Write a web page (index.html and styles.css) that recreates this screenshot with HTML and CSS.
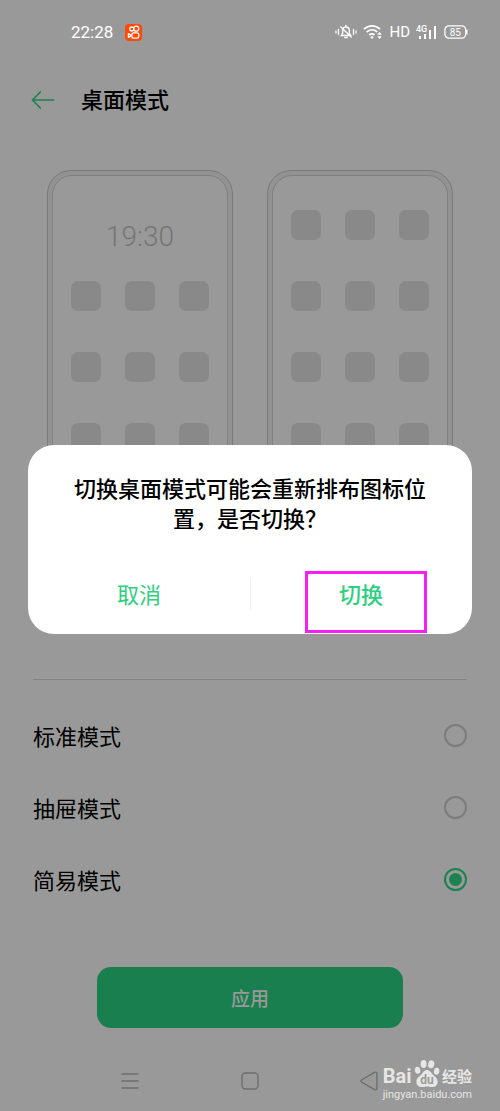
FILE: index.html
```html
<!DOCTYPE html>
<html lang="zh-CN">
<head>
<meta charset="utf-8">
<meta name="viewport" content="width=device-width, initial-scale=1">
<title>桌面模式</title>
<link rel="stylesheet" href="styles.css">
</head>
<body>
<div class="screen">
  <div class="status">
    <span class="status-time">22:28</span>
    <svg class="app-icon" width="17" height="17" viewBox="0 0 17 17" fill="none" stroke="#fff" stroke-width="1.3">
      <rect width="17" height="17" rx="4" fill="#ff4906" stroke="none"/>
      <circle cx="6.8" cy="5" r="2"/><circle cx="11.2" cy="4.7" r="2.5"/>
      <rect x="6.8" y="8.8" width="7" height="5.4" rx="1.8"/>
      <path d="M6.8 11.5 3.4 9.6v3.8z" stroke-linejoin="round"/>
    </svg>
    <div class="status-icons">
      <svg width="22" height="16" viewBox="0 0 22 16" fill="none" stroke="#fff" stroke-width="1.3" stroke-linecap="round">
        <path d="M6.200 11.500h9.600L14.300 9V6.400c0-2-1.300-3.400-3.300-3.400S7.700 4.400 7.700 6.400V9zM11 1.500V3M9.800 13.500h2.400M5.800 3l10.400 10"/>
        <path d="M3.500 5.500v5M1 7v2M18.500 5.500v5M21 7v2"/>
      </svg>
      <svg width="20" height="16" viewBox="0 0 20 16" fill="none" stroke="#fff" stroke-width="1.800">
        <path d="M1 5.200C5.700.7 12.300.7 17 5.200M3.600 8.200c3.300-3.100 7.500-3.100 10.600-.2M6.200 11c1.800-1.500 3.600-1.500 5.300 0"/>
        <path d="M9 15l-1.800-2c1-.9 2.600-.9 3.600 0z" fill="#fff" stroke="none"/>
        <path d="M14.200 10.800 16.500 8l2.300 2.800zM14.200 12.200l2.300 2.800 2.300-2.800z" fill="#fff" stroke="none"/>
      </svg>
      <span class="hd">HD</span>
      <svg width="22" height="16" viewBox="0 0 22 16" fill="#fff">
        <text class="net" x="0" y="8">4G</text>
        <rect x="3" y="12" width="2" height="3"/><rect x="8" y="10" width="2" height="5"/>
        <rect x="13" y="6" width="2" height="9"/><rect x="18" y="2" width="2" height="13"/>
      </svg>
      <svg width="24" height="14" viewBox="0 0 24 14" fill="none" stroke="#fff">
        <rect x=".9" y=".9" width="20.800" height="12.200" rx="4" stroke-width="1.300"/>
        <path d="M22.800 4.800v4.400" stroke-width="1.500"/>
        <text class="charge" x="11.300" y="10.600" text-anchor="middle" fill="#fff" stroke="none">85</text>
      </svg>
    </div>
  </div>

  <header class="header">
    <button class="back" aria-label="返回">
      <svg width="24" height="18" viewBox="0 0 24 18" fill="none" stroke="#1a8350" stroke-width="1.700" stroke-linecap="round" stroke-linejoin="round"><path d="M22.500 9H1.500M9.300 1 1.500 9l7.800 8"/></svg>
    </button>
    <h1 class="title">桌面模式</h1>
  </header>

  <main class="content">
    <div class="previews">
      <div class="phone"><div class="phone-face">
        <div class="clock">19:30</div>
        <div class="apps"><i></i><i></i><i></i><i></i><i></i><i></i><i></i><i></i><i></i></div>
      </div></div>
      <div class="phone"><div class="phone-face">
        <div class="apps"><i></i><i></i><i></i><i></i><i></i><i></i><i></i><i></i><i></i><i></i><i></i><i></i></div>
      </div></div>
    </div>
    <form class="modes">
      <label class="mode">标准模式<input class="radio" type="radio" name="mode"></label>
      <label class="mode">抽屉模式<input class="radio" type="radio" name="mode"></label>
      <label class="mode">简易模式<input class="radio" type="radio" name="mode" checked></label>
    </form>
    <button class="apply">应用</button>
  </main>

  <nav class="nav">
    <button class="nav-button" aria-label="菜单"><svg width="20" height="20" viewBox="0 0 20 20" fill="none" stroke="#6e6e6e" stroke-width="1.300"><path d="M1.500 3h17M1.500 10h17M1.500 17h17"/></svg></button>
    <button class="nav-button" aria-label="主页"><svg width="20" height="20" viewBox="0 0 20 20" fill="none" stroke="#6e6e6e" stroke-width="1.400"><rect x="2" y="2" width="16" height="16" rx="3.500"/></svg></button>
    <button class="nav-button" aria-label="后退"><svg width="20" height="20" viewBox="0 0 20 20" fill="none" stroke="#6e6e6e" stroke-width="1.400" stroke-linejoin="round"><path d="M1.500 9 14.500 1.300q2.400-.8 2.400 1.500v14.400q0 2.300-2.400 1.500L1.500 11q-1-1 0-2z"/></svg></button>
  </nav>

  <div class="dialog" role="dialog" aria-modal="true" aria-labelledby="question">
    <h2 class="question" id="question">切换桌面模式可能会重新排布图标位置，是否切换？</h2>
    <div class="actions">
      <button class="action">取消</button>
      <button class="action action-main">切换<span class="marker"></span></button>
    </div>
  </div>

  <div class="watermark">
    <div class="brand">
      <span class="bai">Bai</span>
      <svg width="26" height="30" viewBox="0 0 26 30" fill="#e6e6e6">
        <ellipse cx="3.600" cy="12.300" rx="2.700" ry="3.500" transform="rotate(-10 3.600 12.300)"/>
        <ellipse cx="9.600" cy="6" rx="3" ry="4"/>
        <ellipse cx="17.200" cy="6.300" rx="3" ry="4" transform="rotate(12 17.200 6.300)"/>
        <ellipse cx="22.600" cy="13.300" rx="2.700" ry="3.500" transform="rotate(10 22.600 13.300)"/>
        <path d="M13 12c2.800 0 4 2.500 6 4.800 2 2.100 4.600 3.700 4.600 6.900 0 3.800-2.500 5.300-5.600 5.300-1.800 0-3.300-.6-5-.6s-3.200.6-5 .6c-3 0-5.600-1.500-5.600-5.300 0-3.200 2.600-4.800 4.600-6.900 2-2.300 3.200-4.800 6-4.800z"/>
        <text class="du" x="13" y="26" text-anchor="middle">du</text>
      </svg>
      <span class="jingyan">经验</span>
    </div>
    <div class="site">jingyan.baidu.com</div>
  </div>
</div>
</body>
</html>
```

FILE: styles.css
```css
* { box-sizing: border-box; }

body {
  margin: 0;
  background: #999;
  color: #000;
  font-family: Roboto, "Noto Sans CJK SC", sans-serif;
}

button {
  margin: 0;
  padding: 0;
  border: 0;
  background: none;
  font: inherit;
}

svg { display: block; }

.screen {
  position: relative;
  display: flex;
  flex-direction: column;
  min-height: 100vh;
}

.status {
  display: flex;
  align-items: center;
  gap: 12px;
  height: 64px;
  padding: 0 32px 0 71px;
  color: #fff;
}
.status-time { font-size: 17px; }
.status-icons {
  display: flex;
  align-items: center;
  gap: 6px;
  margin-left: auto;
}
.hd { font-size: 15px; }
.net { font: 500 9px Roboto, sans-serif; }
.charge { font: 10px Roboto, sans-serif; }

.header {
  display: flex;
  align-items: center;
  gap: 26px;
  height: 72px;
  padding: 0 31px;
}
.title {
  margin: 0;
  padding-bottom: 4px;
  font-size: 22px;
  font-weight: 500;
}

.content {
  display: flex;
  flex-direction: column;
  flex: 1;
  padding: 34px 33px 0;
}

.previews {
  display: flex;
  justify-content: center;
  gap: 34px;
  height: 510px;
  padding-bottom: 110px;
  border-bottom: 1px solid #848484;
}
.phone {
  width: 186px;
  padding: 4px;
  border: 1px solid #7a7a7a;
  border-radius: 24px;
  background: #929292;
}
.phone-face {
  display: flex;
  flex-direction: column;
  height: 100%;
  padding: 34px 18px 0;
  border: 1px solid #808080;
  border-radius: 20px;
  background: #999;
}
.clock {
  height: 71px;
  padding-top: 8px;
  color: #757575;
  font-size: 28px;
  font-weight: 300;
  line-height: 38px;
  text-align: center;
}
.apps {
  display: grid;
  grid-template-columns: repeat(3, 30px);
  grid-auto-rows: 30px;
  justify-content: space-between;
  row-gap: 41px;
}
.apps i {
  border-radius: 7px;
  background: #898989;
}

.modes {
  display: flex;
  flex-direction: column;
  padding-top: 19px;
}
.mode {
  display: flex;
  align-items: center;
  justify-content: space-between;
  height: 72px;
  font-size: 22px;
}
.radio {
  appearance: none;
  width: 23px;
  height: 23px;
  margin: 0;
  padding: 3px;
  border: 2px solid #7c7c7c;
  border-radius: 50%;
}
.radio:checked {
  border-color: #1a8350;
  background: #1a8350 content-box;
}

.apply {
  align-self: center;
  width: 306px;
  height: 61px;
  margin-top: 52px;
  border-radius: 14px;
  background: #1a7f4e;
  color: #999;
  font-size: 19px;
  font-weight: 500;
}

.nav {
  display: grid;
  grid-template-columns: repeat(3, 120px);
  justify-content: center;
  height: 61px;
}
.nav-button {
  display: flex;
  align-items: center;
  justify-content: center;
}

.dialog {
  position: absolute;
  top: 445px;
  left: 28px;
  right: 28px;
  padding: 30px 40px 0;
  border-radius: 26px;
  background: #fff;
}
.question {
  margin: 0;
  font-size: 22px;
  font-weight: 500;
  line-height: 30px;
  text-align: center;
}
.actions {
  display: flex;
  margin: 22px -40px 0;
}
.action {
  position: relative;
  flex: 1;
  height: 77px;
  padding-bottom: 5px;
  color: #2dcf80;
  font-size: 22px;
}
.action-main { font-weight: 500; }
.action-main::before {
  content: "";
  position: absolute;
  top: 21px;
  left: 0;
  width: 1px;
  height: 32px;
  background: #f0f0f0;
}
.marker {
  position: absolute;
  top: 14px;
  right: 45px;
  left: 55px;
  height: 62px;
  border: 3px solid #fb1df5;
}

.watermark {
  position: absolute;
  right: 28px;
  bottom: 9px;
  color: #e6e6e6;
}
.brand {
  display: flex;
  align-items: flex-end;
  justify-content: space-between;
  height: 30px;
}
.bai {
  font: bold 20px/24px Roboto, sans-serif;
}
.du {
  fill: #999;
  font: bold 12px Roboto, sans-serif;
}
.jingyan {
  font-size: 15px;
  font-weight: 700;
  line-height: 22px;
}
.site {
  font: 11px/14px Roboto, sans-serif;
}
```
